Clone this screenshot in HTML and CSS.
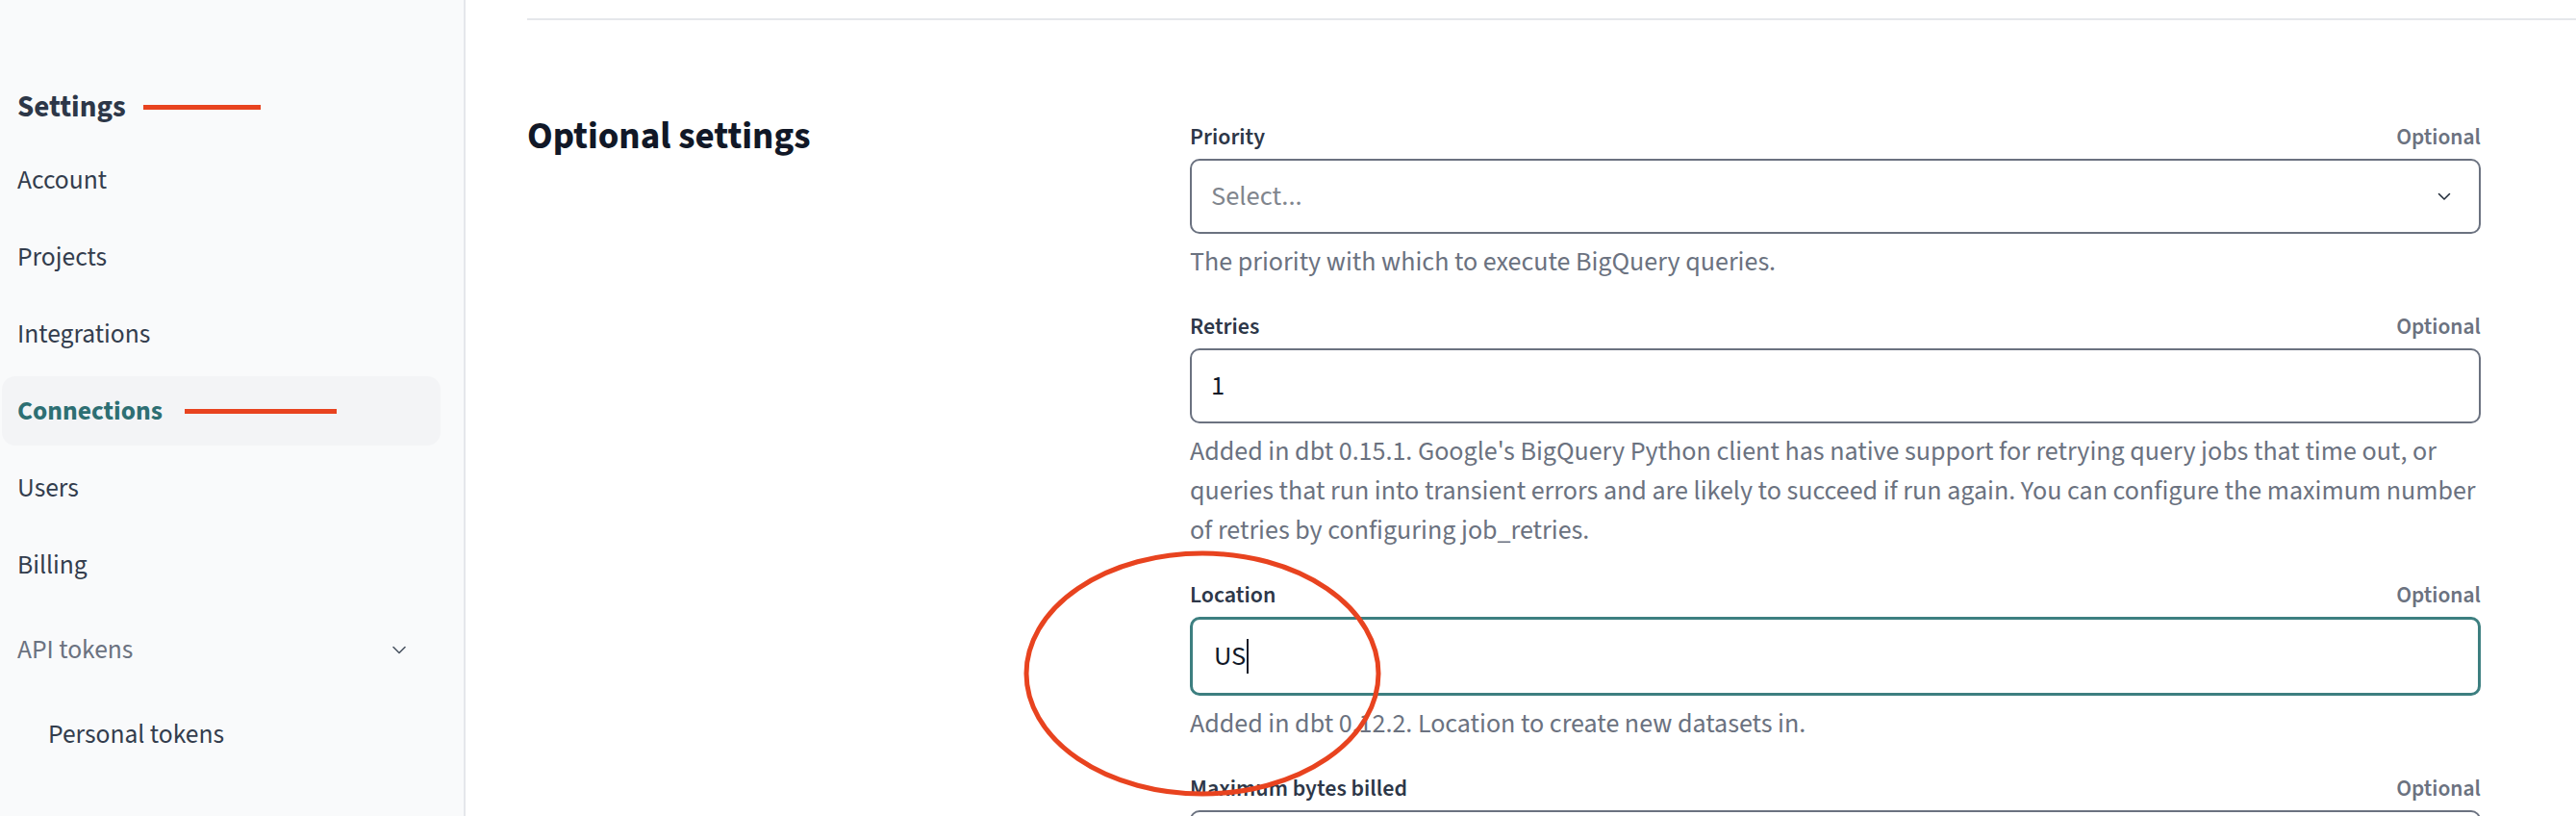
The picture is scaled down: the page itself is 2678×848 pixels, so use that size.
FILE: index.html
```html
<!DOCTYPE html>
<html lang="en">
<head>
<meta charset="utf-8">
<title>Settings - Connections</title>
<link rel="stylesheet" href="styles.css">
</head>
<body>
<div class="app">
  <aside class="sidebar">
    <div class="side-title"><span>Settings</span><span class="mark mark-title"></span></div>
    <nav class="nav">
      <a class="nav-item">Account</a>
      <a class="nav-item">Projects</a>
      <a class="nav-item">Integrations</a>
      <a class="nav-item active"><span>Connections</span><span class="mark mark-active"></span></a>
      <a class="nav-item">Users</a>
      <a class="nav-item">Billing</a>
      <div class="nav-item group"><span>API tokens</span>
        <svg class="chev-side" width="14" height="9" viewBox="0 0 14 9"><path d="M1 1.5 L7 7.5 L13 1.5" fill="none" stroke="#4b5563" stroke-width="1.6" stroke-linecap="round" stroke-linejoin="round"/></svg>
      </div>
      <a class="nav-item sub">Personal tokens</a>
    </nav>
  </aside>
  <main class="main">
    <div class="rule"></div>
    <section class="section">
      <h2 class="section-title">Optional settings</h2>
      <div class="form">
        <div class="field">
          <div class="field-head"><span class="label">Priority</span><span class="optional">Optional</span></div>
          <div class="control select">
            <span class="placeholder">Select...</span>
            <svg class="chev" width="14" height="9" viewBox="0 0 14 9"><path d="M1.5 1.5 L7 7 L12.5 1.5" fill="none" stroke="#1f2937" stroke-width="1.5" stroke-linecap="round" stroke-linejoin="round"/></svg>
          </div>
          <p class="help">The priority with which to execute BigQuery queries.</p>
        </div>
        <div class="field">
          <div class="field-head"><span class="label">Retries</span><span class="optional">Optional</span></div>
          <div class="control"><span class="value">1</span></div>
          <p class="help">Added in dbt 0.15.1. Google's BigQuery Python client has native support for retrying query jobs that time out, or<br>queries that run into transient errors and are likely to succeed if run again. You can configure the maximum number<br>of retries by configuring job_retries.</p>
        </div>
        <div class="field">
          <div class="field-head"><span class="label">Location</span><span class="optional">Optional</span></div>
          <div class="control focused"><span class="value">US</span><span class="caret"></span></div>
          <p class="help">Added in dbt 0.12.2. Location to create new datasets in.</p>
        </div>
        <div class="field">
          <div class="field-head"><span class="label">Maximum bytes billed</span><span class="optional">Optional</span></div>
          <div class="control"><span class="value"></span></div>
        </div>
      </div>
    </section>
  </main>
  <svg class="annotation" width="380" height="264" viewBox="0 0 380 264"><ellipse cx="190" cy="132" rx="183" ry="125" fill="none" stroke="#e8431f" stroke-width="5"/></svg>
</div>
</body>
</html>
```

FILE: styles.css
```css
* { box-sizing: border-box; }
html, body { margin: 0; padding: 0; }
body {
  font-family: "Source Sans Pro", "Source Sans 3", Lato, "Noto Sans", sans-serif;
  background: #ffffff;
  color: #1f2937;
  overflow: hidden;
}
.app {
  position: relative;
  display: flex;
  width: 2678px;
  height: 848px;
  overflow: hidden;
}
.sidebar {
  flex: 0 0 484px;
  background: #f9fafb;
  border-right: 2px solid #e5e7eb;
  padding-top: 91px;
}
.side-title {
  display: flex;
  align-items: center;
  height: 40px;
  padding-left: 18px;
  font-size: 31px;
  font-weight: 700;
  color: #2d3748;
}
.mark {
  display: inline-block;
  height: 5px;
  background: #e8431f;
}
.mark-title { width: 122px; margin-left: 18px; }
.mark-active { width: 158px; margin-left: 23px; }
.nav {
  display: flex;
  flex-direction: column;
  gap: 8px;
  margin-top: 20px;
}
.nav-item {
  display: flex;
  align-items: center;
  height: 72px;
  margin: 0 24px 0 2px;
  padding-left: 16px;
  border-radius: 14px;
  font-size: 27.5px;
  color: #333d4d;
  text-decoration: none;
}
.nav-item.active {
  background: #f3f4f6;
  color: #2d6f73;
  font-weight: 700;
}
.nav-item.group {
  margin-top: 8px;
  color: #6b7280;
  justify-content: space-between;
  padding-right: 36px;
}
.nav-item.sub {
  margin-top: 8px;
  padding-left: 48px;
}
.main {
  flex: 1;
  min-width: 0;
  padding: 19px 99px 0 64px;
}
.rule {
  height: 2px;
  background: #e5e7eb;
  margin-right: -99px;
}
.section {
  display: grid;
  grid-template-columns: 689px minmax(0, 1fr);
  margin-top: 106px;
}
.section-title {
  margin: 0;
  font-size: 39px;
  line-height: 30px;
  font-weight: 700;
  color: #111827;
}
.form {
  display: flex;
  flex-direction: column;
  min-width: 0;
}
.field { margin-bottom: 31px; }
.field-head {
  display: flex;
  justify-content: space-between;
  align-items: center;
  height: 30px;
  margin-bottom: 8px;
  font-weight: 600;
}
.label { color: #2d3748; font-size: 24px; }
.optional { color: #6b7280; font-size: 23.5px; }
.control {
  display: flex;
  align-items: center;
  height: 78px;
  border: 2px solid #6b7280;
  border-radius: 10px;
  padding: 0 20px;
  font-size: 28.5px;
  background: #fff;
}
.control.focused {
  height: 82px;
  border: 3px solid #3d7f80;
  padding-left: 22px;
}
.select { justify-content: space-between; padding-right: 29px; }
.placeholder { color: #80858d; }
.value { color: #111827; }
.caret {
  display: inline-block;
  width: 2px;
  height: 36px;
  background: #111827;
  margin-left: 1px;
}
.help {
  margin: 9px 0 0;
  font-size: 28px;
  line-height: 41px;
  color: #6b7280;
  white-space: nowrap;
}
.annotation {
  position: absolute;
  left: 1060px;
  top: 568px;
  pointer-events: none;
}
```
